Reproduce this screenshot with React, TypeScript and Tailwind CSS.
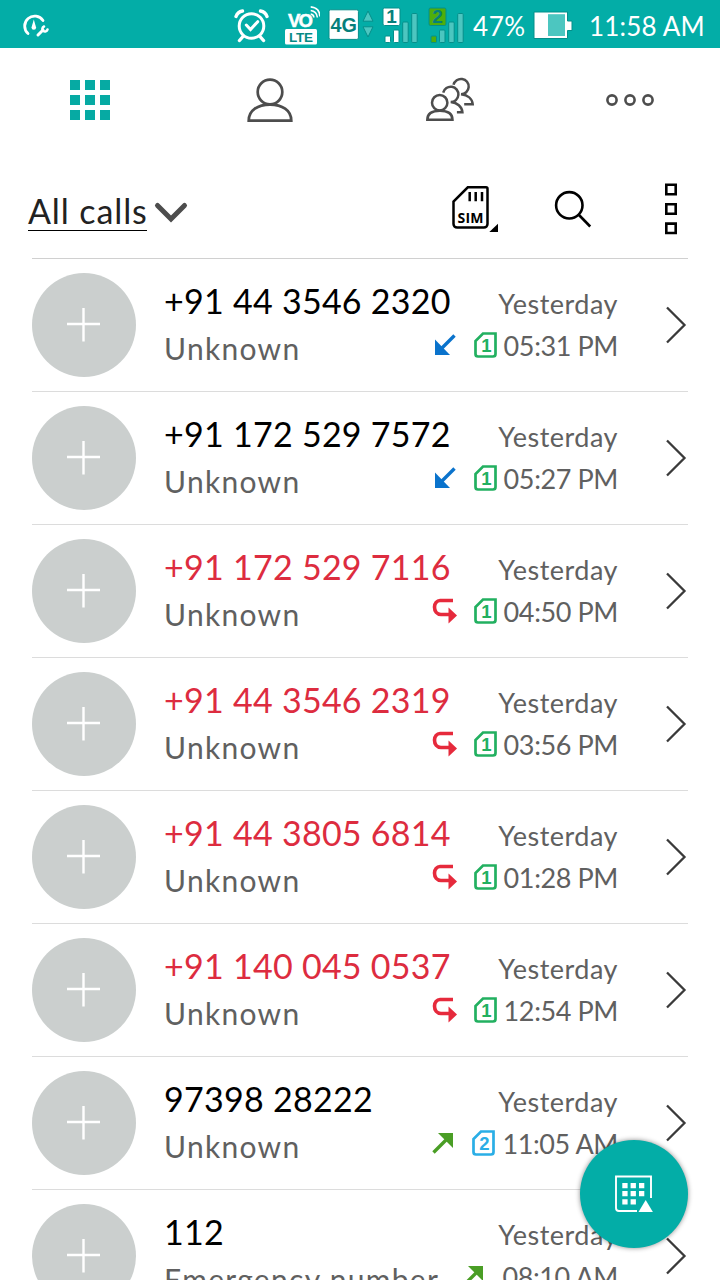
import clsx from "clsx";

type CallKind = "incoming" | "missed" | "outgoing";

interface Call {
  number: string;
  label: string;
  day: string;
  time: string;
  kind: CallKind;
  sim?: 1 | 2;
}

const calls: Call[] = [
  { number: "+91 44 3546 2320", label: "Unknown", day: "Yesterday", time: "05:31 PM", kind: "incoming", sim: 1 },
  { number: "+91 172 529 7572", label: "Unknown", day: "Yesterday", time: "05:27 PM", kind: "incoming", sim: 1 },
  { number: "+91 172 529 7116", label: "Unknown", day: "Yesterday", time: "04:50 PM", kind: "missed", sim: 1 },
  { number: "+91 44 3546 2319", label: "Unknown", day: "Yesterday", time: "03:56 PM", kind: "missed", sim: 1 },
  { number: "+91 44 3805 6814", label: "Unknown", day: "Yesterday", time: "01:28 PM", kind: "missed", sim: 1 },
  { number: "+91 140 045 0537", label: "Unknown", day: "Yesterday", time: "12:54 PM", kind: "missed", sim: 1 },
  { number: "97398 28222", label: "Unknown", day: "Yesterday", time: "11:05 AM", kind: "outgoing", sim: 2 },
  { number: "112", label: "Emergency number", day: "Yesterday", time: "08:10 AM", kind: "outgoing" },
];

export default function App() {
  return (
    <div className="relative flex h-[1280px] w-[720px] flex-col overflow-hidden bg-white font-['Lato','Open_Sans',sans-serif]">
      <StatusBar />
      <Tabs />
      <FilterBar />
      <ul className="mx-8 border-t border-[#d0d0d0]">
        {calls.map((call) => (
          <CallRow key={call.number} call={call} />
        ))}
      </ul>
      <button
        aria-label="Dialpad"
        className="absolute right-8 bottom-8 flex h-[108px] w-[108px] items-center justify-center rounded-full bg-[#03ada7] shadow-[0_0_5px_rgba(0,0,0,0.45)]"
      >
        <DialpadIcon />
      </button>
    </div>
  );
}

function StatusBar() {
  return (
    <header className="flex h-12 shrink-0 items-center bg-[#03ada7] text-[26px] text-white">
      <svg className="ml-5 h-12 w-8" viewBox="20 0 32 48" fill="none" stroke="#fff" strokeLinecap="round">
        <path d="M28 33.5A10 10 0 1 1 43 20.5" strokeWidth="2.8" />
        <path d="M33.8 19.5l-2.3 8a2.3 2.3 0 0 0 4.6 0z" fill="#fff" stroke="none" />
        <path d="M38 35l5-5" strokeWidth="3" />
        <path d="M44 26.5a2.6 2.6 0 1 0 3.5 3" strokeWidth="2.6" />
      </svg>

      {/* alarm */}
      <svg className="ml-[181px] h-12 w-9" viewBox="233 0 36 48" fill="none" stroke="#fff" strokeWidth="3" strokeLinecap="round">
        <circle cx="251.5" cy="26" r="12.3" />
        <path d="M246.3 25l4.2 4.5 7.2-7.8" />
        <path d="M236 16.5q1.5-4.5 6.5-5.5M267 16.5q-1.5-4.5-6.5-5.5" strokeWidth="3.4" />
        <path d="M243 36.5l-3.5 4M260 36.5l3.5 4" strokeWidth="3.4" />
      </svg>

      {/* volte */}
      <svg className="ml-[15px] h-12 w-9 font-['Liberation_Sans',sans-serif] font-bold" viewBox="284 0 36 48">
        <text x="288" y="26.7" fontSize="18.5" fill="#fff" stroke="#fff" strokeWidth="0.5" textLength="25">VO</text>
        <path d="M310.7 14q3 .5 3.2 3.5M310.7 10.5q6 .7 6.7 7M310.7 6.9q9 .8 9.2 9.7" fill="none" stroke="#fff" strokeWidth="1.6" />
        <rect x="285" y="29" width="32" height="15.5" rx="1.5" fill="#fff" />
        <text x="289" y="41.6" fontSize="13.5" fill="#058a85" textLength="24">LTE</text>
      </svg>

      <svg className="ml-2 h-12 w-[47px] font-['Liberation_Sans',sans-serif] font-bold" viewBox="328 0 47 48">
        <rect x="329" y="9.8" width="29.4" height="29.6" rx="1.5" fill="#fff" stroke="#058f8a" />
        <text x="330.5" y="32.2" fontSize="20.5" textLength="26.5" lengthAdjust="spacingAndGlyphs" fill="#067f7b">4G</text>
        <path d="M368 11l5 10.2h-10zM368 37l5-10.2h-10z" fill="#4cc6c0" stroke="#058f8a" strokeLinejoin="round" />
      </svg>

      <SignalIcon slot="1" className="ml-[7px]" />
      <SignalIcon slot="2" className="ml-[9px]" />

      <span className="mt-1 ml-[8px] w-[60px] whitespace-nowrap tracking-[0.6px]">47%</span>
      <svg className="h-12 w-[41px]" viewBox="534 0 41 48">
        <path d="M535 12h33.5v9h4.5v9.5h-4.5v8H535z" fill="#fff" stroke="#058f8a" />
        <path d="M549 14.2h17v21.8h-17z" fill="#4cc6c0" />
      </svg>
      <span className="mt-1 ml-[15px] whitespace-nowrap tracking-[0.2px]">11:58 AM</span>
    </header>
  );
}

function SignalIcon({ slot, className }: { slot: "1" | "2"; className?: string }) {
  const green = slot === "2";
  return (
    <svg
      className={clsx("h-12 w-[37px] font-['Liberation_Sans',sans-serif] font-bold", className)}
      viewBox="382 0 37 48"
      stroke="#058f8a"
    >
      <rect x="383" y="8" width="17" height="17.5" rx="1.5" fill={green ? "#4fae0c" : "#fff"} />
      <text x="386.3" y="23.4" fontSize="19" fill="#067f7b" stroke="none">{slot}</text>
      <rect x="385" y="36" width="5.5" height="6.5" rx="1" fill={green ? "#4fae0c" : "#fff"} />
      <rect x="393.5" y="30" width="5.5" height="12.5" rx="1" fill={green ? "#4cc6c0" : "#fff"} />
      <rect x="402.7" y="22" width="5.5" height="20.5" rx="1" fill="#4cc6c0" />
      <rect x="411.7" y="13.5" width="5.5" height="29" rx="1" fill="#4cc6c0" />
    </svg>
  );
}

function Tabs() {
  return (
    <nav className="grid h-[104px] shrink-0 grid-cols-4 place-items-center text-[#4d4d4d]">
      <div className="grid grid-cols-3 gap-[5px]">
        {Array.from({ length: 9 }, (_, i) => (
          <span key={i} className="h-2.5 w-2.5 bg-[#06aaa3]" />
        ))}
      </div>
      <svg className="h-12 w-12" viewBox="246 76 48 48" fill="none" stroke="currentColor" strokeWidth="2.7">
        <circle cx="270" cy="92" r="12.3" />
        <path d="M248.7 120.7C248.7 110 258 104.6 270 104.6S291.3 110 291.3 120.7z" />
      </svg>
      <svg className="h-12 w-[50px]" viewBox="425 76 50 48" fill="none" stroke="currentColor" strokeWidth="2.5">
        <circle cx="439.7" cy="102.7" r="7.7" />
        <path d="M427.3 119.8C427.3 114 432 110.8 439.9 110.8S452.5 114 452.5 119.8z" />
        <path d="M443.2 92.6a7.7 7.7 0 1 1 7.5 9.5c6.5.6 11.3 4.5 11.7 10.2h-5.5" />
        <path d="M453.5 84.8a7.7 7.7 0 1 1 7.5 9.5c6.5.6 11.3 4.3 11.7 10h-8.5" />
      </svg>
      <svg className="h-4 w-[50px]" viewBox="-25 -8 50 16" fill="none" stroke="currentColor" strokeWidth="2.6">
        <circle cx="-18" r="4.6" />
        <circle r="4.6" />
        <circle cx="18" r="4.6" />
      </svg>
    </nav>
  );
}

function FilterBar() {
  return (
    <div className="flex h-[106px] shrink-0 items-center pt-[7px] text-black">
      <button className="ml-7 flex items-center">
        <span className="mt-1 h-[41px] w-[119px] border-b border-black text-left text-[34px] leading-[41px] tracking-[0.9px] whitespace-nowrap text-[#222]">
          All calls
        </span>
        <svg className="mt-1 ml-1.5 h-9 w-9" viewBox="153 194 36 36" fill="none" stroke="#4d4d4d" strokeWidth="5" strokeLinecap="round">
          <path d="M157.5 206.5L171 220l13.5-13.5" />
        </svg>
      </button>

      <svg className="ml-auto h-[52px] w-[50px]" viewBox="450 183 50 52" fill="none" stroke="currentColor" strokeWidth="2.5">
        <path d="M467.8 187.3H486a1.5 1.5 0 0 1 1.5 1.5V224a3.6 3.6 0 0 1-3.6 3.6h-26.8a3.6 3.6 0 0 1-3.6-3.6V201.5z" />
        <path d="M469.7 192v9.3M475.7 192v9.3M482 192v9.3" />
        <text x="457.5" y="223.3" fontSize="14" textLength="26" fill="currentColor" stroke="none" className="font-['Open_Sans',sans-serif] font-bold">SIM</text>
        <path d="M498 223.7v8.3h-8.7z" fill="currentColor" stroke="none" />
      </svg>
      <svg className="ml-[53px] h-[52px] w-10" viewBox="553 183 40 52" fill="none" stroke="currentColor" strokeWidth="2.6">
        <circle cx="569.3" cy="205.3" r="13.2" />
        <path d="M578.5 214.5l11.7 12" />
      </svg>
      <svg className="mr-[42px] ml-[71px] h-[52px] w-[14px]" viewBox="664 183 14 52" fill="none" stroke="currentColor" strokeWidth="2.6">
        <path d="M666.3 184.8h9.4v9.4h-9.4zM666.3 204.3h9.4v9.4h-9.4zM666.3 223.6h9.4v9.4h-9.4z" />
      </svg>
    </div>
  );
}

function CallRow({ call }: { call: Call }) {
  return (
    <li className="flex h-[133px] items-start border-b border-[#dcdcdc] text-[#606060]">
      <span className="mt-[14px] flex h-[104px] w-[104px] shrink-0 items-center justify-center rounded-full bg-[#cbcfce]">
        <svg className="h-[34px] w-[34px]" viewBox="0 0 34 34" stroke="#fff" strokeWidth="2.4">
          <path d="M16.5 0v33.5M0 16h33" />
        </svg>
      </span>
      <div className="mt-[18px] ml-7 w-[280px] shrink-0 whitespace-nowrap">
        <p
          className={clsx(
            "text-[34px] leading-[48px] tracking-[0.27px]",
            call.kind === "missed" ? "text-[#dd2c3f]" : "text-black"
          )}
        >
          {call.number}
        </p>
        <p className="text-[30px] leading-[46px] tracking-[1.3px]">{call.label}</p>
      </div>
      <div className="mt-6 flex w-[174px] flex-col items-end text-[27px] leading-[42px] whitespace-nowrap">
        <span className="tracking-[0.5px]">{call.day}</span>
        <div className="flex items-center">
          <CallArrow kind={call.kind} />
          {call.sim && <SimBadge slot={call.sim} />}
          <span className="tracking-[-0.4px]">{call.time}</span>
        </div>
      </div>
      <svg className="mt-[46px] ml-auto h-10 w-[22px] shrink-0" viewBox="0 0 22 40" fill="none" stroke="#3a3a3a" strokeWidth="2.3">
        <path d="M1 2.5L18.5 20 1 37.5" />
      </svg>
    </li>
  );
}

function CallArrow({ kind }: { kind: CallKind }) {
  if (kind === "missed") {
    return (
      <svg className="mr-4 mb-0.5 h-[26px] w-[26px]" viewBox="0 0 26 26" fill="none">
        <path d="M21 2.5H8a5.5 6.5 0 0 0-5.5 6.5c0 4.5 2.5 7.5 6.500 7.500h8" stroke="#e62a3c" strokeWidth="3.6" />
        <path d="M16.5 9.5L25 17.5l-8.5 8z" fill="#e62a3c" />
      </svg>
    );
  }
  if (kind === "incoming") {
    return (
      <svg className="mr-[18px] mb-0.5 h-[22px] w-[22px]" viewBox="0 0 22 22" fill="#0a73cc">
        <path d="M1 5.5V21h15z" />
        <path d="M20.5 1.5L6 16" stroke="#0a73cc" strokeWidth="3.4" />
      </svg>
    );
  }
  return (
    <svg className="mr-[18px] mb-0.5 h-[22px] w-[22px]" viewBox="0 0 22 22" fill="#4a9e25">
      <path d="M6 1h15v15z" />
      <path d="M1.5 20.5L16 6" stroke="#4a9e25" strokeWidth="3.4" />
    </svg>
  );
}

function SimBadge({ slot }: { slot: 1 | 2 }) {
  return (
    <svg
      className={clsx("mr-[7px] mb-0.5 h-[26px] w-[23px]", slot === 1 ? "text-[#22b060]" : "text-[#2aaee6]")}
      viewBox="0 0 23 26"
      fill="none"
      stroke="currentColor"
    >
      <path d="M9 1.5h12.5V22a2.5 2.5 0 0 1-2.5 2.5H4A2.5 2.5 0 0 1 1.5 22V9z" strokeWidth="2.7" />
      <text
        x="12.3"
        y="20.4"
        textAnchor="middle"
        fontSize="18.5"
        fill="currentColor"
        stroke="none"
        className="font-['Liberation_Sans',sans-serif] font-bold"
      >
        {slot}
      </text>
    </svg>
  );
}

function DialpadIcon() {
  return (
    <svg className="h-[38px] w-[38px]" viewBox="615 1175 38 38" fill="#fff">
      <path d="M651 1198v-21.5h-35V1208a3 3 0 0 0 3 3h18" fill="none" stroke="#fff" strokeWidth="1.9" />
      <path d="M622.3 1183h5.3v5.3h-5.3zM630.6 1183h5.3v5.3h-5.3zM639 1183h5.3v5.3H639zM622.3 1191h5.3v5.3h-5.3zM630.6 1191h5.3v5.3h-5.3zM639 1191h5.3v5.3H639zM622.3 1199.3h5.3v5.3h-5.3zM630.6 1199.3h5.3v5.3h-5.3z" />
      <path d="M645.7 1200l7.2 12h-14.4z" />
    </svg>
  );
}
